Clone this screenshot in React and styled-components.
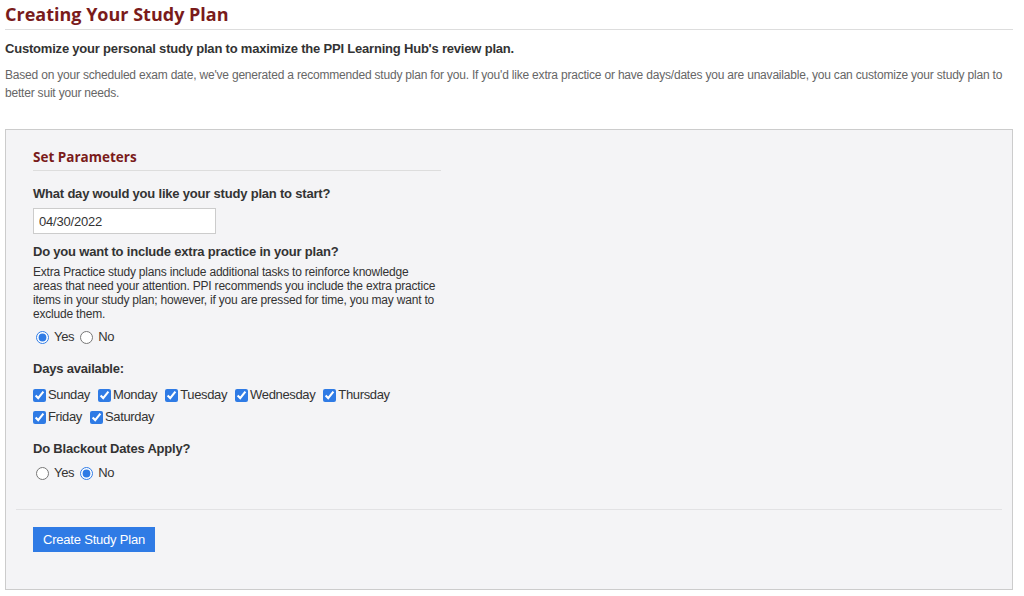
import React from "react";
import styled, { createGlobalStyle } from "styled-components";

const GlobalStyle = createGlobalStyle`
  body {
    margin: 0;
    background: #fff;
    font-family: "Liberation Sans", Arial, sans-serif;
    letter-spacing: -0.2px;
    color: #333;
  }
`;

const Page = styled.div`
  width: 1008px;
  padding: 2px 0 0 5px;
`;

const Title = styled.h1`
  margin: 0;
  font-family: "Open Sans", sans-serif;
  font-size: 18px;
  font-weight: 700;
  line-height: 24px;
  letter-spacing: 0;
  color: #7a1b1b;
  padding-bottom: 3px;
  border-bottom: 1px solid #ddd;
`;

const Lead = styled.p`
  margin: 11px 0 0;
  font-size: 13px;
  font-weight: 700;
  line-height: 16px;
  color: #333;
`;

const Intro = styled.p`
  margin: 9px 0 0;
  font-size: 12px;
  line-height: 18px;
  color: #666;
`;

const Panel = styled.section`
  margin-top: 27px;
  border: 1px solid #ccc;
  background: #f4f4f6;
  padding: 18px 10px 37px;
`;

const Body = styled.div`
  padding: 0 17px;
`;

const SectionTitle = styled.h2`
  margin: 0;
  width: 408px;
  font-family: "Open Sans", sans-serif;
  font-size: 13.5px;
  font-weight: 700;
  line-height: 18px;
  letter-spacing: 0;
  color: #7a1b1b;
  padding-bottom: 4px;
  border-bottom: 1px solid #ddd;
`;

const Question = styled.div`
  margin-top: ${(p) => p.$top || 0}px;
  font-size: 13px;
  font-weight: 700;
  line-height: 16px;
  color: #333;
`;

const DateInput = styled.input`
  display: block;
  margin-top: 6px;
  box-sizing: border-box;
  width: 183px;
  height: 26px;
  padding: 0 5px;
  border: 1px solid #ccc;
  background: #fff;
  font-family: "Liberation Sans", Arial, sans-serif;
  font-size: 13px;
  letter-spacing: -0.2px;
  color: #333;
  outline: none;
`;

const Help = styled.p`
  margin: 5px 0 0;
  width: 406px;
  font-size: 12px;
  line-height: 14px;
  letter-spacing: -0.2px;
  color: #333;
`;

const Choices = styled.div`
  margin-top: ${(p) => p.$top || 7}px;
  display: flex;
  flex-wrap: wrap;
  width: ${(p) => p.$width || 420}px;
  column-gap: ${(p) => p.$gap || 3}px;
  font-size: 13px;
  line-height: ${(p) => p.$line || 18}px;
  letter-spacing: -0.35px;
  color: #333;
`;

const Choice = styled.label`
  display: inline-flex;
  align-items: center;
  gap: 2px;
  input {
    margin: ${(p) => (p.$radio ? "0 3px 0 3px" : "0")};
    width: 13px;
    height: 13px;
    accent-color: #2f7be5;
  }
`;

const Divider = styled.hr`
  margin: 27px 0 0;
  border: 0;
  border-top: 1px solid #e2e2e4;
`;

const Button = styled.button`
  margin: 17px 0 0 17px;
  width: 122px;
  height: 25px;
  border: 0;
  background: #2f7be5;
  color: #fff;
  font-family: "Liberation Sans", Arial, sans-serif;
  font-size: 13px;
  letter-spacing: -0.2px;
  cursor: pointer;
`;

const days = ["Sunday", "Monday", "Tuesday", "Wednesday", "Thursday", "Friday", "Saturday"];

function YesNo({ name, value }) {
  return (
    <Choices>
      <Choice $radio>
        <input type="radio" name={name} defaultChecked={value === "yes"} />
        Yes
      </Choice>
      <Choice $radio>
        <input type="radio" name={name} defaultChecked={value === "no"} />
        No
      </Choice>
    </Choices>
  );
}

export default function App() {
  return (
    <>
      <GlobalStyle />
      <Page>
        <Title>Creating Your Study Plan</Title>
        <Lead>Customize your personal study plan to maximize the PPI Learning Hub's review plan.</Lead>
        <Intro>
          Based on your scheduled exam date, we've generated a recommended study plan for you. If you'd like extra
          practice or have days/dates you are unavailable, you can customize your study plan to better suit your needs.
        </Intro>

        <Panel>
          <Body>
            <SectionTitle>Set Parameters</SectionTitle>

            <Question $top={15}>What day would you like your study plan to start?</Question>
            <DateInput defaultValue="04/30/2022" />

            <Question $top={10}>Do you want to include extra practice in your plan?</Question>
            <Help>
              Extra Practice study plans include additional tasks to reinforce knowledge areas that need your
              attention. PPI recommends you include the extra practice items in your study plan; however, if you are
              pressed for time, you may want to exclude them.
            </Help>
            <YesNo name="extra" value="yes" />

            <Question $top={15}>Days available:</Question>
            <Choices $top={7} $line={22} $gap={8} $width={370}>
              {days.map((d) => (
                <Choice key={d}>
                  <input type="checkbox" defaultChecked />
                  {d}
                </Choice>
              ))}
            </Choices>

            <Question $top={13}>Do Blackout Dates Apply?</Question>
            <YesNo name="blackout" value="no" />
          </Body>
          <Divider />
          <Button>Create Study Plan</Button>
        </Panel>
      </Page>
    </>
  );
}
